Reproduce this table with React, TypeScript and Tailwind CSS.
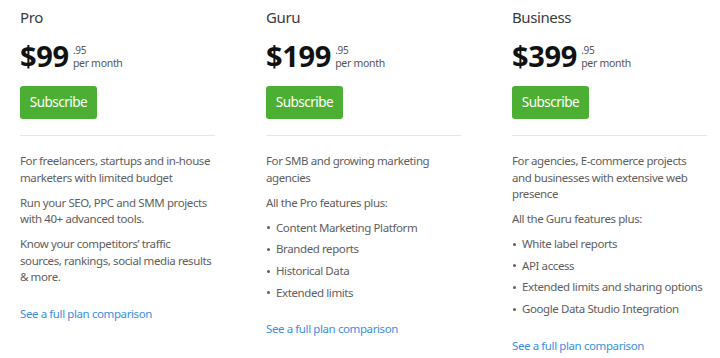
import React from "react";

type Plan = {
  name: string;
  price: string;
  paras: string[];
  bullets?: string[];
};

const plans: Plan[] = [
  {
    name: "Pro",
    price: "$99",
    paras: [
      "For freelancers, startups and in-house marketers with limited budget",
      "Run your SEO, PPC and SMM projects with 40+ advanced tools.",
      "Know your competitors’ traffic sources, rankings, social media results & more.",
    ],
  },
  {
    name: "Guru",
    price: "$199",
    paras: ["For SMB and growing marketing agencies", "All the Pro features plus:"],
    bullets: ["Content Marketing Platform", "Branded reports", "Historical Data", "Extended limits"],
  },
  {
    name: "Business",
    price: "$399",
    paras: [
      "For agencies, E-commerce projects and businesses with extensive web presence",
      "All the Guru features plus:",
    ],
    bullets: [
      "White label reports",
      "API access",
      "Extended limits and sharing options",
      "Google Data Studio Integration",
    ],
  },
];

function PlanCol({ plan }: { plan: Plan }) {
  return (
    <div className="flex w-[195px] shrink-0 flex-col">
      <div className="mt-[7px] text-[15px] leading-[20px] tracking-[-0.4px] text-[#3a3a3a]">{plan.name}</div>
      <div className="mt-[12px] flex items-end">
        <span className="text-[29px] font-bold leading-[34px] tracking-[-0.3px] text-[#111111]">{plan.price}</span>
        <span className="mb-[4px] ml-[4px] flex flex-col tracking-[-0.3px] text-[#555555]">
          <span className="text-[10px] leading-[11px]">.95</span>
          <span className="mt-[1px] text-[10.5px] leading-[12px]">per month</span>
        </span>
      </div>
      <button className="mt-[13px] h-[33px] w-[77px] shrink-0 rounded-[3px] bg-[#4cae33] text-[13.5px] tracking-[-0.5px] text-white">
        Subscribe
      </button>
      <div className="mt-[16px] h-px w-full shrink-0 bg-[#e6e6e6]" />
      <div className="mt-[17px] flex flex-col gap-[8.5px] text-[11.5px] leading-[16.5px] tracking-[-0.4px] text-[#5e5e5e]">
        {plan.paras.map((p, i) => (
          <p key={i} className="max-w-[193px]">
            {p}
          </p>
        ))}
        {plan.bullets && (
          <ul className="flex flex-col gap-[5.2px]">
            {plan.bullets.map((b, i) => (
              <li key={i} className="flex items-center">
                <span className="ml-[1px] mr-[6px] h-[3px] w-[3px] shrink-0 rounded-full bg-[#5e5e5e]" />
                <span>{b}</span>
              </li>
            ))}
          </ul>
        )}
      </div>
      <a className="mt-[20px] text-[11.5px] leading-[16.5px] tracking-[-0.4px] text-[#3a8ee0]" href="#">
        See a full plan comparison
      </a>
    </div>
  );
}

export default function App() {
  return (
    <div
      className="flex min-h-[358px] w-[720px] items-start gap-[51px] bg-white pl-5"
      style={{ fontFamily: '"Noto Sans", "Open Sans", sans-serif' }}
    >
      {plans.map((p) => (
        <PlanCol key={p.name} plan={p} />
      ))}
    </div>
  );
}
